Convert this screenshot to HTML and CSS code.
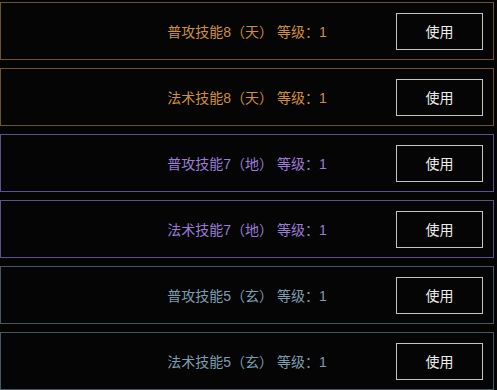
FILE: index.html
```html
<!DOCTYPE html>
<html lang="zh">
<head>
<meta charset="utf-8">
<link rel="stylesheet" href="styles.css">
</head>
<body>
<div class="list">
  <div class="row tian"><span class="label">普攻技能8（天） 等级：1</span><button class="btn">使用</button></div>
  <div class="row tian"><span class="label">法术技能8（天） 等级：1</span><button class="btn">使用</button></div>
  <div class="row di"><span class="label">普攻技能7（地） 等级：1</span><button class="btn">使用</button></div>
  <div class="row di"><span class="label">法术技能7（地） 等级：1</span><button class="btn">使用</button></div>
  <div class="row xuan"><span class="label">普攻技能5（玄） 等级：1</span><button class="btn">使用</button></div>
  <div class="row xuan"><span class="label">法术技能5（玄） 等级：1</span><button class="btn">使用</button></div>
</div>
</body>
</html>
```
FILE: styles.css
```css
html, body {
  margin: 0;
  padding: 0;
  background: #040404;
  overflow: hidden;
}
body {
  font-family: "Liberation Sans", "Noto Sans CJK SC", sans-serif;
}
.list {
  display: flex;
  flex-direction: column;
  gap: 8px;
  padding: 2px 3px 0 0;
}
.row {
  box-sizing: border-box;
  height: 58px;
  border: 1.5px solid #6e5030;
  display: grid;
  grid-template-columns: 1fr auto 1fr;
  align-items: center;
  background: #050505;
}
.label {
  grid-column: 2;
  font-size: 14px;
  white-space: pre;
}
.btn {
  grid-column: 3;
  justify-self: end;
  margin-right: 10px;
  width: 87px;
  height: 37px;
  box-sizing: border-box;
  background: #050505;
  border: 1.5px solid #c4c4c4;
  color: #ededed;
  font-family: "Liberation Sans", "Noto Sans CJK SC", sans-serif;
  font-size: 14px;
  padding: 0;
}
.tian { border-color: #6f5230; }
.tian .label { color: #cf8f3e; }
.di { border-color: #5f4f8c; }
.di .label { color: #9a7cd6; }
.xuan { border-color: #3f5a60; }
.xuan .label { color: #7c9db0; }
```
